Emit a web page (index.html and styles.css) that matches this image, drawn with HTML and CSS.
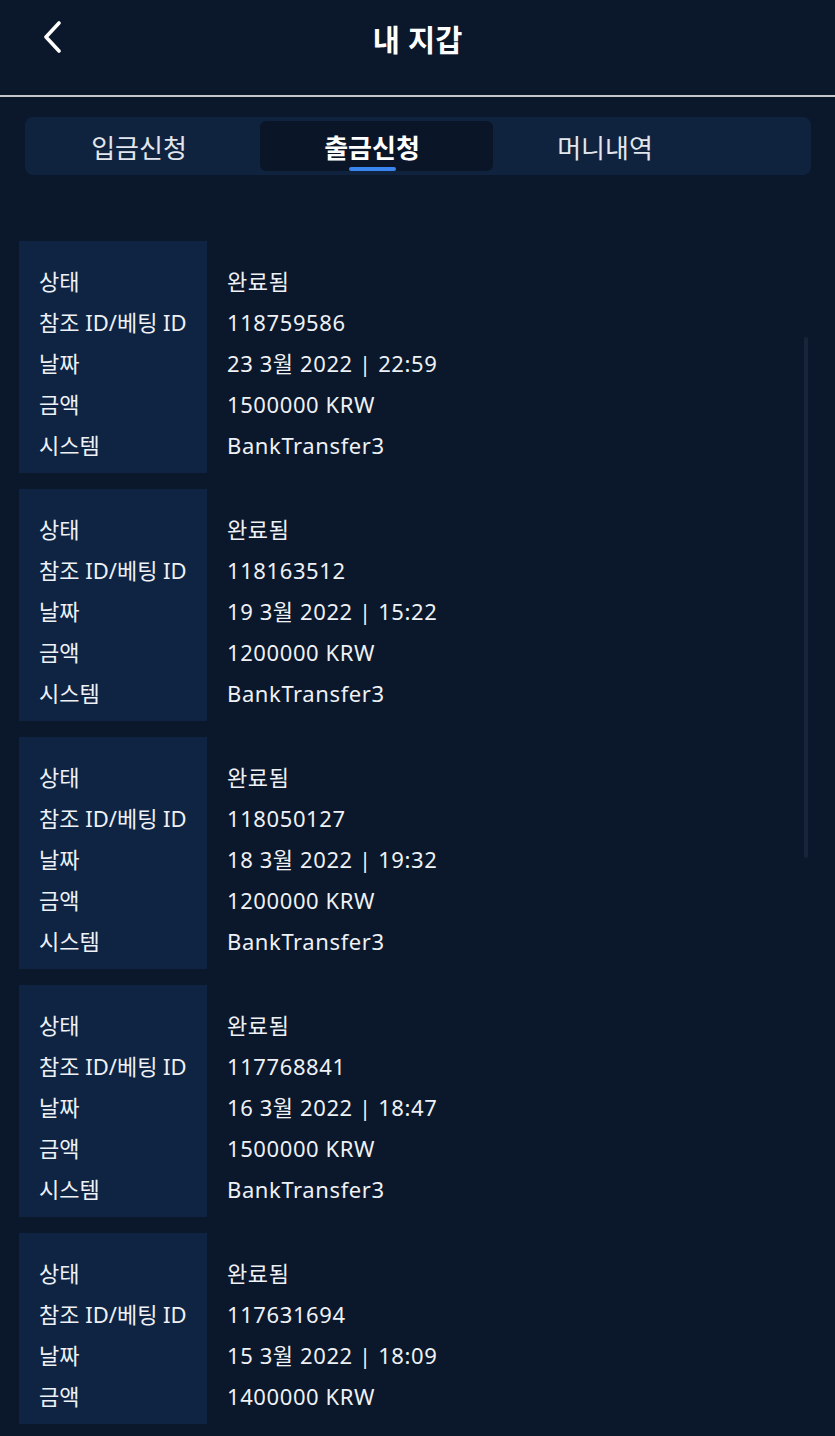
FILE: index.html
```html
<!DOCTYPE html>
<html lang="ko">
<head>
<meta charset="utf-8">
<title>내 지갑</title>
<link rel="stylesheet" href="styles.css">
</head>
<body>
<header class="topbar">
  <a class="back" href="#" aria-label="뒤로">
    <svg width="20" height="32" viewBox="0 0 20 32"><path d="M16 2 L3 16 L16 30" fill="none" stroke="#ffffff" stroke-width="3.6" stroke-linecap="round" stroke-linejoin="round"/></svg>
  </a>
  <h1 class="title">내 지갑</h1>
</header>
<nav class="tabs">
  <div class="tab">입금신청</div>
  <div class="tab active">출금신청</div>
  <div class="tab">머니내역</div>
</nav>
<main class="list">
  <div class="scroll-thumb"></div>
  <section class="card">
    <div class="labels"><div>상태</div><div>참조 ID/베팅 ID</div><div>날짜</div><div>금액</div><div>시스템</div></div>
    <div class="values"><div>완료됨</div><div>118759586</div><div>23 3월 2022 | 22:59</div><div>1500000 KRW</div><div>BankTransfer3</div></div>
  </section>
  <section class="card">
    <div class="labels"><div>상태</div><div>참조 ID/베팅 ID</div><div>날짜</div><div>금액</div><div>시스템</div></div>
    <div class="values"><div>완료됨</div><div>118163512</div><div>19 3월 2022 | 15:22</div><div>1200000 KRW</div><div>BankTransfer3</div></div>
  </section>
  <section class="card">
    <div class="labels"><div>상태</div><div>참조 ID/베팅 ID</div><div>날짜</div><div>금액</div><div>시스템</div></div>
    <div class="values"><div>완료됨</div><div>118050127</div><div>18 3월 2022 | 19:32</div><div>1200000 KRW</div><div>BankTransfer3</div></div>
  </section>
  <section class="card">
    <div class="labels"><div>상태</div><div>참조 ID/베팅 ID</div><div>날짜</div><div>금액</div><div>시스템</div></div>
    <div class="values"><div>완료됨</div><div>117768841</div><div>16 3월 2022 | 18:47</div><div>1500000 KRW</div><div>BankTransfer3</div></div>
  </section>
  <section class="card">
    <div class="labels"><div>상태</div><div>참조 ID/베팅 ID</div><div>날짜</div><div>금액</div></div>
    <div class="values"><div>완료됨</div><div>117631694</div><div>15 3월 2022 | 18:09</div><div>1400000 KRW</div></div>
  </section>
</main>
</body>
</html>
```
FILE: styles.css
```css
* { box-sizing: border-box; }
html, body { margin: 0; padding: 0; }
body {
  background: #0b172a;
  color: #eef1f5;
  font-family: "Noto Sans", "Noto Sans CJK KR", sans-serif;
  height: 1436px;
  overflow: hidden;
}
.topbar {
  height: 97px;
  border-bottom: 2px solid #c3c6ca;
  display: flex;
  justify-content: center;
  align-items: flex-start;
  position: relative;
}
.back {
  position: absolute;
  left: 43px;
  top: 21px;
  display: block;
  line-height: 0;
}
.title {
  margin: 0;
  height: 76px;
  line-height: 76px;
  font-size: 29.5px;
  font-weight: 700;
  color: #ffffff;
  font-family: "Noto Sans CJK KR", sans-serif;
}
.tabs {
  margin: 20px 24px 0 25px;
  height: 58px;
  background: #10233e;
  border-radius: 8px;
  padding: 4px 2px;
  display: flex;
}
.tab {
  width: 233px;
  height: 50px;
  display: flex;
  align-items: center;
  justify-content: center;
  padding-right: 9px;
  font-family: "Noto Sans CJK KR", sans-serif;
  font-size: 26px;
  color: #e3e7ed;
  position: relative;
  border-radius: 6px;
}
.tab.active {
  background: #0a1628;
  color: #ffffff;
  font-weight: 700;
}
.tab.active::after {
  content: "";
  position: absolute;
  bottom: 0;
  left: 89px;
  width: 47px;
  height: 4px;
  border-radius: 2px;
  background: #3a86ee;
}
.list {
  position: relative;
  padding: 66px 0 0 19px;
  display: flex;
  flex-direction: column;
  gap: 16px;
}
.scroll-thumb {
  position: absolute;
  left: 804px;
  top: 162px;
  width: 4px;
  height: 521px;
  border-radius: 2px;
  background: #17253a;
}
.card {
  display: flex;
  font-size: 22px;
  line-height: 41px;
}
.labels {
  width: 188px;
  background: #0f2443;
  padding: 20px 0 7px 20px;
  color: #eef1f5;
}
.values {
  padding: 20px 0 7px 20px;
  color: #eef1f5;
  letter-spacing: 0.6px;
}
```
